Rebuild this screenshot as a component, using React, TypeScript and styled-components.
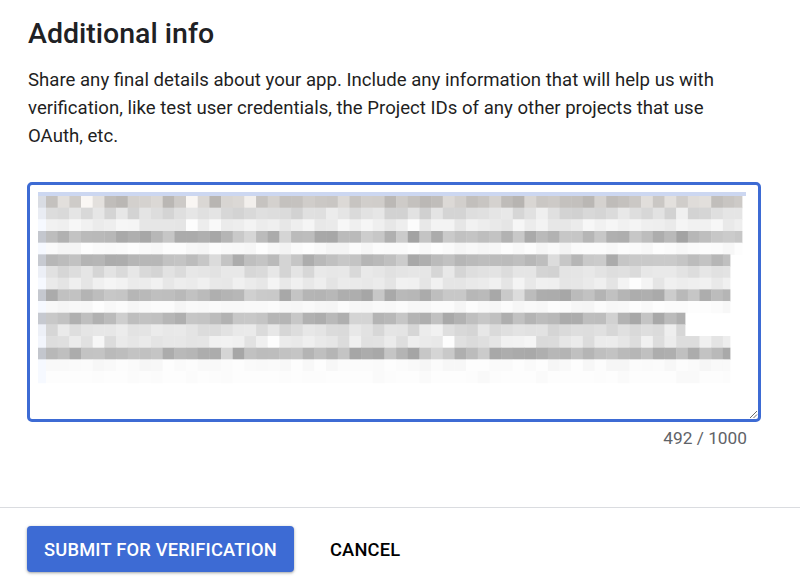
import React from "react";
import styled, { createGlobalStyle } from "styled-components";

const Global = createGlobalStyle`
  html, body { margin: 0; padding: 0; background: #ffffff; }
  body { font-family: Roboto, "Noto Sans", Arial, sans-serif; color: #202124; }
`;

const Page = styled.div`
  width: 800px;
  height: 581px;
  display: flex;
  flex-direction: column;
  overflow: hidden;
`;

const Content = styled.div`
  padding: 16px 39px 0 27px;
  display: flex;
  flex-direction: column;
`;

const Title = styled.h1`
  margin: 0 0 0 1px;
  font-size: 28.5px;
  line-height: 36px;
  font-weight: 500;
  color: #202124;
`;

const Description = styled.p`
  margin: 14px 0 0 1px;
  font-size: 18.6px;
  line-height: 28px;
  color: #1f1f1f;
`;

const TextBox = styled.div`
  position: relative;
  margin-top: 32px;
  height: 240px;
  box-sizing: border-box;
  border: 3px solid #3d6bd4;
  border-radius: 5px;
  padding: 7px 0 0 8px;
`;

const Mosaic = styled.svg`
  display: block;
`;

const ResizeHandle = styled.svg`
  position: absolute;
  right: 0;
  bottom: 0;
`;

const Counter = styled.div`
  align-self: flex-end;
  margin: 6px 14px 0 0;
  font-size: 17.3px;
  line-height: 20px;
  color: #5f6368;
`;

const Divider = styled.hr`
  margin: 59px 0 0 0;
  border: none;
  border-top: 1px solid #dadce0;
  width: 100%;
`;

const Actions = styled.div`
  display: flex;
  align-items: center;
  gap: 36px;
  padding: 18px 0 0 27px;
`;

const Button = styled.button<{ $primary?: boolean }>`
  font-family: Roboto, "Noto Sans", Arial, sans-serif;
  font-size: 18.3px;
  font-weight: 500;
  letter-spacing: 0.2px;
  height: 46px;
  padding: 0 ${(p) => (p.$primary ? "17px" : "0")};
  border: none;
  border-radius: 4px;
  cursor: pointer;
  background: ${(p) => (p.$primary ? "#3d6bd4" : "transparent")};
  color: ${(p) => (p.$primary ? "#ffffff" : "#000000")};
  box-shadow: ${(p) =>
    p.$primary ? "0 1px 2px rgba(60,64,67,0.3), 0 1px 3px 1px rgba(60,64,67,0.15)" : "none"};
`;

type Row = { base: number; v: number; end: number };

const ROWS: Row[] = [
  { base: 205, v: 22, end: 742 },
  { base: 220, v: 12, end: 742 },
  { base: 238, v: 9, end: 742 },
  { base: 183, v: 20, end: 742 },
  { base: 248, v: 5, end: 742 },
  { base: 186, v: 18, end: 730 },
  { base: 222, v: 12, end: 730 },
  { base: 236, v: 9, end: 730 },
  { base: 184, v: 18, end: 730 },
  { base: 249, v: 4, end: 730 },
  { base: 184, v: 16, end: 685 },
  { base: 224, v: 12, end: 685 },
  { base: 230, v: 12, end: 730 },
  { base: 183, v: 18, end: 730 },
  { base: 250, v: 4, end: 730 },
  { base: 252, v: 3, end: 730 },
];

function rng(seed: number) {
  let s = seed;
  return () => {
    s = (s * 1103515245 + 12345) & 0x7fffffff;
    return s / 0x7fffffff;
  };
}

const X0 = 38;
const ROW_H = 11.67;
const COL_W = 11.67;

function buildCells() {
  const r = rng(7);
  const cells: { x: number; y: number; w: number; h: number; c: string }[] = [];
  ROWS.forEach((row, i) => {
    const y = 4 + i * ROW_H;
    const g0 = Math.min(252, row.base + 14 + r() * 6);
    cells.push({ x: 0, y, w: 8, h: ROW_H + 0.5, c: `rgb(${g0 - 6},${g0 - 3},${g0 + 4})` });
    let x = 8;
    while (X0 + x < row.end) {
      const w = Math.min(COL_W, row.end - X0 - x);
      let g = row.base + (r() - 0.5) * 2 * row.v;
      if (r() < 0.08) g += row.v * 1.2;
      g = Math.max(140, Math.min(253, Math.round(g)));
      const warm = i === 0 ? 3 : 0;
      cells.push({ x, y, w: w + 0.4, h: ROW_H + 0.5, c: `rgb(${g},${g - warm},${g - warm * 2})` });
      x += COL_W;
    }
  });
  return cells;
}

const CELLS = buildCells();

export default function App() {
  return (
    <Page>
      <Global />
      <Content>
        <Title>Additional info</Title>
        <Description>
          Share any final details about your app. Include any information that will help us with
          verification, like test user credentials, the Project IDs of any other projects that use
          OAuth, etc.
        </Description>
        <TextBox>
          <Mosaic width={710} height={192} viewBox="0 0 710 192">
            <rect x={0} y={0} width={708} height={4} fill="#ccd7f1" />
            {CELLS.map((c, i) => (
              <rect key={i} x={c.x} y={c.y} width={c.w} height={c.h} fill={c.c} />
            ))}
          </Mosaic>
          <ResizeHandle width={10} height={10} viewBox="0 0 10 10">
            <line x1={2} y1={9} x2={9} y2={2} stroke="#6b6b6b" strokeWidth={1} />
            <line x1={5.5} y1={9} x2={9} y2={5.5} stroke="#6b6b6b" strokeWidth={1} />
          </ResizeHandle>
        </TextBox>
        <Counter>492 / 1000</Counter>
      </Content>
      <Divider />
      <Actions>
        <Button $primary>SUBMIT FOR VERIFICATION</Button>
        <Button>CANCEL</Button>
      </Actions>
    </Page>
  );
}
